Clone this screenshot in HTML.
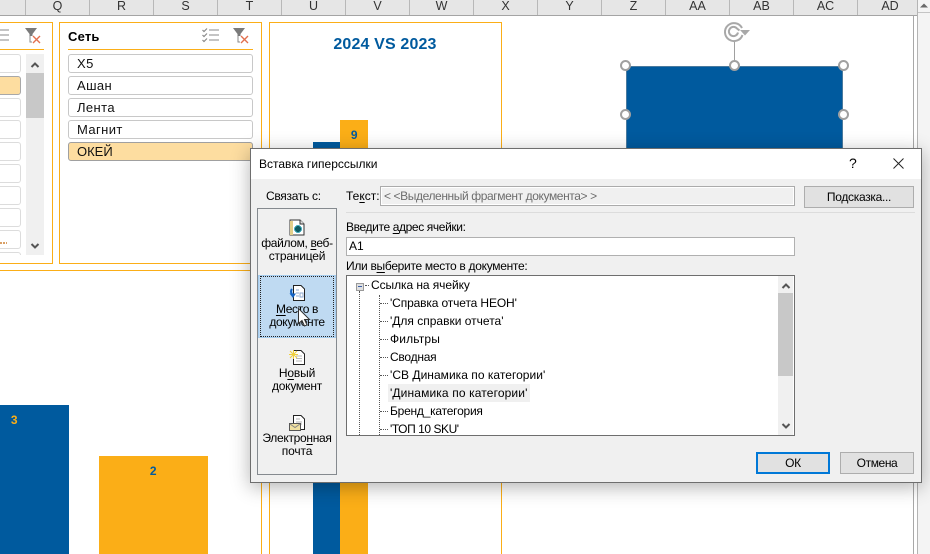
<!DOCTYPE html>
<html><head><meta charset="utf-8"><style>
html,body{margin:0;padding:0;background:#fff}
#p{position:relative;width:930px;height:554px;overflow:hidden;background:#fff;font-family:"Liberation Sans",sans-serif;font-size:12px;color:#000}
#p div{position:absolute;box-sizing:border-box}
.t{white-space:nowrap;line-height:14px;letter-spacing:-.3px}
.c{transform:translateX(-50%)}
.h{top:0;height:15px;line-height:13px;width:64px;text-align:center;font-size:12.5px;color:#333;border-right:1px solid #b8b8b8}
.i{left:68px;width:185px;height:19px;border:1px solid #c8c8c8;border-radius:3px;background:#fff;font-size:13px;line-height:18px;padding-left:8px;letter-spacing:.4px;color:#111}
.j{left:-40px;width:61px;height:19px;border:1px solid #dcdcdc;border-radius:3px;background:#fff}
.o{background:#fbae17}.b{background:#005a9e}
.hd{width:11px;height:11px;border-radius:50%;background:#fff;border:2px solid #a0a0a0}
u{text-decoration-thickness:1px;text-underline-offset:2px}
svg{position:absolute;overflow:visible}
.tr{left:390px}
</style></head><body><div id="p">

<!-- column headers -->
<div style="left:0;top:0;width:918px;height:16px;background:#e6e6e6;border-bottom:1px solid #a4a4a4"></div>
<div class="h" style="left:-38px"></div>
<div class="h" style="left:26px">Q</div><div class="h" style="left:90px">R</div><div class="h" style="left:154px">S</div><div class="h" style="left:218px">T</div><div class="h" style="left:282px">U</div><div class="h" style="left:346px">V</div><div class="h" style="left:410px">W</div><div class="h" style="left:474px">X</div><div class="h" style="left:538px">Y</div><div class="h" style="left:602px">Z</div><div class="h" style="left:666px">AA</div><div class="h" style="left:730px">AB</div><div class="h" style="left:794px">AC</div><div class="h" style="left:858px;border-right:0">AD</div>
<div style="left:913px;top:16px;width:1px;height:538px;background:#a8a8a8"></div>
<div style="left:917px;top:0;width:13px;height:554px;background:#f4f4f4;border-left:1px solid #b4b4b4"></div>
<div style="left:918px;top:12px;width:12px;height:1px;background:#c4c4c4"></div>
<svg style="left:920px;top:3px" width="8" height="5"><path d="M0 4.5L4 0.5L8 4.5Z" fill="#6a6a6a"/></svg>

<!-- outer slicer frame -->
<div style="left:-10px;top:22px;width:272px;height:249px;border:1px solid #fbae17;border-top:0"></div>
<div style="left:261px;top:270px;width:1px;height:284px;background:#fbae17"></div>

<!-- left slicer -->
<div style="left:-10px;top:22px;width:63px;height:242px;border:1px solid #fbae17"></div>
<div style="left:0;top:49px;width:44px;height:1px;background:#fbae17"></div>
<div class="j" style="top:54px"></div>
<div class="j" style="top:76px;background:#fddda0;border-color:#a8a8a8"></div>
<div class="j" style="top:98px"></div><div class="j" style="top:120px"></div><div class="j" style="top:142px"></div><div class="j" style="top:164px"></div><div class="j" style="top:186px"></div><div class="j" style="top:208px"></div><div class="j" style="top:230px"></div>
<div class="j" style="top:252px;height:3px;border-bottom:0;border-radius:3px 3px 0 0"></div>
<div style="left:0;top:242px;width:7px;height:2px;background:repeating-linear-gradient(90deg,#d9a066 0 2px,transparent 2px 3px)"></div>
<div style="left:26px;top:54px;width:18px;height:201px;background:#f0f0f0"></div>
<div style="left:26px;top:73px;width:18px;height:45px;background:#c8c8c8"></div>
<svg style="left:31px;top:62px" width="8" height="6"><path d="M0.5 5L4 1.5L7.5 5" fill="none" stroke="#555" stroke-width="2"/></svg>
<svg style="left:31px;top:243px" width="8" height="6"><path d="M0.5 1L4 4.5L7.5 1" fill="none" stroke="#555" stroke-width="2"/></svg>
<svg style="left:0;top:29px" width="10" height="12"><path d="M0 1H9M0 6H9M0 11H9" stroke="#8a8a8a" stroke-width="1" fill="none"/></svg>
<svg style="left:25px;top:28px" width="16" height="16"><path d="M0 0H12L7.5 6V8H4.5V6Z" fill="#7a7a7a"/><path d="M5 8V14H7" stroke="#8a8a8a" fill="none"/><path d="M8 8L15 15M15 8L8 15" stroke="#e2704f" stroke-width="1.4"/></svg>

<!-- second slicer -->
<div style="left:59px;top:22px;width:203px;height:242px;border:1px solid #fbae17"></div>
<div class="t" style="left:68px;top:30px;font-size:13px;font-weight:bold;letter-spacing:.2px">Сеть</div>
<div style="left:68px;top:49px;width:185px;height:1px;background:#fbae17"></div>
<svg style="left:202px;top:28px" width="17" height="14"><path d="M0.5 2L2 3.5L5 0.5M0.5 7L2 8.5L5 5.5M0.5 12L2 13.5L5 10.5" fill="none" stroke="#8a8a8a" stroke-width="1.2"/><path d="M7 2H17M7 7H17M7 12H17" stroke="#8a8a8a" stroke-width="1"/></svg>
<svg style="left:233px;top:28px" width="17" height="16"><path d="M0 0H12L7.5 6V8H4.5V6Z" fill="#7a7a7a"/><path d="M5 8V14H7" stroke="#8a8a8a" fill="none"/><path d="M8 8L15 15M15 8L8 15" stroke="#e2704f" stroke-width="1.4"/></svg>
<div class="i" style="top:54px">X5</div>
<div class="i" style="top:76px">Ашан</div>
<div class="i" style="top:98px">Лента</div>
<div class="i" style="top:120px">Магнит</div>
<div class="i" style="top:142px;background:#fddda0;border-color:#a0a0a0;letter-spacing:0">ОКЕЙ</div>

<!-- third panel chart -->
<div style="left:269px;top:22px;width:233px;height:532px;border:1px solid #fbae17;border-bottom:0"></div>
<div class="t c" style="left:385px;top:36px;font-size:16px;line-height:18px;font-weight:bold;color:#005a9e;letter-spacing:.15px">2024 VS 2023</div>
<div class="b" style="left:313px;top:142px;width:27px;height:412px"></div>
<div class="o" style="left:340px;top:120px;width:28px;height:434px"></div>
<div class="t c" style="left:354px;top:128px;font-weight:bold;color:#005a9e;font-size:12px">9</div>

<!-- bottom chart -->
<div class="b" style="left:0;top:405px;width:69px;height:149px"></div>
<div class="t c" style="left:14px;top:413px;font-weight:bold;color:#fbae17">3</div>
<div class="o" style="left:99px;top:456px;width:109px;height:98px"></div>
<div class="t c" style="left:153px;top:464px;font-weight:bold;color:#005a9e">2</div>

<!-- selected shape -->
<div class="b" style="left:626px;top:66px;width:217px;height:120px;border:1px solid #4a7a9e;border-bottom:0"></div>
<div style="left:734px;top:41px;width:1px;height:20px;background:#a0a0a0"></div>
<div class="hd" style="left:620px;top:60px"></div><div class="hd" style="left:729px;top:60px"></div><div class="hd" style="left:838px;top:60px"></div>
<div class="hd" style="left:620px;top:109px"></div><div class="hd" style="left:838px;top:109px"></div>
<svg style="left:724px;top:21px" width="27" height="22"><path d="M18 7A9 9 0 1 0 18.5 14" fill="none" stroke="#a8a8a8" stroke-width="2"/><path d="M14 11.5A4.6 4.6 0 1 1 13 7.5L15.5 9.5" fill="none" stroke="#a8a8a8" stroke-width="2"/><path d="M16 9H26L21 14.5Z" fill="#a8a8a8"/></svg>

<!-- dialog -->
<div style="left:250px;top:148px;width:672px;height:335px;background:#f0f0f0;border:1px solid #6e6e6e;box-shadow:0 4px 18px rgba(0,0,0,.3)"></div>
<div style="left:251px;top:149px;width:670px;height:30px;background:#fff"></div>
<div class="t" style="left:259px;top:157px;letter-spacing:0">Вставка гиперссылки</div>
<div class="t" style="left:849px;top:156px;font-size:14px">?</div>
<svg style="left:893px;top:158px" width="11" height="11"><path d="M0.5 0.5L10.5 10.5M10.5 0.5L0.5 10.5" stroke="#222" stroke-width="1" fill="none"/></svg>

<div class="t" style="left:266px;top:189px">Связать с:</div>
<div class="t" style="left:346px;top:189px;letter-spacing:0">Те<u>к</u>ст:</div>
<div style="left:380px;top:186px;width:415px;height:20px;background:#f0f0f0;border:1px solid #ababab;box-shadow:inset 0 0 0 1px #fff"></div>
<div class="t" style="left:384px;top:189px;color:#6d6d6d;letter-spacing:-.4px">&lt; &lt;Выделенный фрагмент документа&gt; &gt;</div>
<div style="left:804px;top:186px;width:110px;height:22px;background:#e1e1e1;border:1px solid #adadad"></div>
<div class="t c" style="left:859px;top:190px">Подсказка...</div>
<div style="left:346px;top:212px;width:569px;height:1px;background:#dcdcdc"></div>

<div class="t" style="left:346px;top:220px;letter-spacing:-.38px">Введите <u>а</u>дрес ячейки:</div>
<div style="left:346px;top:237px;width:449px;height:19px;background:#fff;border:1px solid #b0b0b0"></div>
<div class="t" style="left:349px;top:239px;letter-spacing:0">А1</div>
<div class="t" style="left:346px;top:259px">Или в<u>ы</u>берите место в документе:</div>

<!-- nav bar -->
<div style="left:257px;top:208px;width:80px;height:267px;background:#f0f0f0;border:1px solid #858a8f"></div>
<div style="left:258px;top:275px;width:78px;height:63px;background:#bfdaf2;border:1px solid #a6cdef"></div>
<div style="left:260px;top:276px;width:74px;height:61px;border:1px dotted #222"></div>

<svg style="left:289px;top:220px" width="17" height="16" shape-rendering="crispEdges"><path d="M1 0H11L15 4V15H1Z" fill="#fff" stroke="#333"/><path d="M1 1H4V15H1Z" fill="#e3cf8a"/><path d="M11 0V4H15" fill="#ddd" stroke="#333"/><circle cx="9" cy="9" r="3.5" fill="#0f5a62" stroke="#4ab0c0"/></svg>
<svg style="left:289px;top:285px" width="17" height="17"><path d="M4.5 0.5H12L15.5 4V15.5H4.5Z" fill="#fff" stroke="#222"/><path d="M7 5H10M7 8H10M11 8H14V12H11ZM7 11H10" stroke="#8eaad0" fill="none"/><path d="M3 4A4 4 0 0 0 4 10" stroke="#1363c4" stroke-width="2" fill="none"/><path d="M0.5 8.5H7L4 13Z" fill="#1363c4"/></svg>
<svg style="left:289px;top:349px" width="17" height="16"><path d="M4.5 1.5H12L15.5 5V15.5H4.5Z" fill="#fff" stroke="#222"/><path d="M7 7H13M7 9.5H13M7 12H13" stroke="#b8b8b8"/><path d="M0 5.5H9M4.5 1V10M1 2L8 9M8 2L1 9" stroke="#f0cf3c" stroke-width="1"/></svg>
<svg style="left:289px;top:415px" width="17" height="16"><path d="M4.5 0.5H12L15.5 4V14.5H4.5Z" fill="#fff" stroke="#222"/><path d="M7 4H11M7 7H13M7 9H13" stroke="#b0b0b0"/><rect x="0.5" y="8.5" width="11" height="7" fill="#f0e0a0" stroke="#555"/><path d="M1 9L6 12.5L11 9" stroke="#888" fill="none"/></svg>

<div class="t c" style="left:297px;top:236px;letter-spacing:-.35px">файлом, <u>в</u>еб-</div>
<div class="t c" style="left:297px;top:249px;letter-spacing:-.2px">страницей</div>
<div class="t c" style="left:297px;top:302px;letter-spacing:-.35px"><u>М</u>есто в</div>
<div class="t c" style="left:297px;top:315px;letter-spacing:-.35px">документе</div>
<div class="t c" style="left:297px;top:366px;letter-spacing:-.15px">Н<u>о</u>вый</div>
<div class="t c" style="left:297px;top:379px;letter-spacing:-.25px">документ</div>
<div class="t c" style="left:297px;top:431px">Электро<u>н</u>ная</div>
<div class="t c" style="left:297px;top:444px;letter-spacing:-.15px">почта</div>
<svg style="left:298px;top:308px" width="14" height="20"><path d="M0.5 0.5V15.5L4 12.5L6.5 18L9 17L6.5 11.5H11.5Z" fill="#fff" stroke="#333" stroke-width="1"/></svg>

<!-- tree -->
<div style="left:346px;top:275px;width:449px;height:161px;background:#fff;border:1px solid #6e6e6e"></div>
<div style="left:778px;top:276px;width:15px;height:159px;background:#f0f0f0"></div>
<div style="left:778px;top:293px;width:15px;height:83px;background:#c8c8c8"></div>
<svg style="left:782px;top:283px" width="8" height="6"><path d="M0.5 5L4 1.5L7.5 5" fill="none" stroke="#555" stroke-width="2"/></svg>
<svg style="left:782px;top:423px" width="8" height="6"><path d="M0.5 1L4 4.5L7.5 1" fill="none" stroke="#555" stroke-width="2"/></svg>
<div style="left:359px;top:291px;width:0;height:144px;border-left:1px dotted #555"></div>
<div style="left:379px;top:295px;width:0;height:140px;border-left:1px dotted #555"></div>
<div style="left:365px;top:285px;width:4px;height:0;border-top:1px dotted #555"></div>
<div style="left:380px;top:303px;width:8px;height:0;border-top:1px dotted #555"></div>
<div style="left:380px;top:321px;width:8px;height:0;border-top:1px dotted #555"></div>
<div style="left:380px;top:339px;width:8px;height:0;border-top:1px dotted #555"></div>
<div style="left:380px;top:357px;width:8px;height:0;border-top:1px dotted #555"></div>
<div style="left:380px;top:375px;width:8px;height:0;border-top:1px dotted #555"></div>
<div style="left:380px;top:411px;width:8px;height:0;border-top:1px dotted #555"></div>
<div style="left:380px;top:429px;width:8px;height:0;border-top:1px dotted #555"></div>
<div style="left:356px;top:283px;width:8px;height:8px;background:#e0e0e0;border:1px solid #999"></div>
<div style="left:358px;top:286px;width:4px;height:1px;background:#3a5ea8"></div>
<div style="left:388px;top:384px;width:142px;height:18px;background:#f0f0f0"></div>
<div class="t" style="left:371px;top:278px;letter-spacing:-.07px">Ссылка на ячейку</div>
<div class="t tr" style="top:296px;letter-spacing:-.13px">'Справка отчета НЕОН'</div>
<div class="t tr" style="top:314px;letter-spacing:0">'Для справки отчета'</div>
<div class="t tr" style="top:332px;letter-spacing:.15px">Фильтры</div>
<div class="t tr" style="top:350px;letter-spacing:-.25px">Сводная</div>
<div class="t tr" style="top:368px;letter-spacing:.03px">'СВ Динамика по категории'</div>
<div class="t tr" style="top:386px;letter-spacing:.13px">'Динамика по категории'</div>
<div class="t tr" style="top:404px;letter-spacing:-.23px">Бренд_категория</div>
<div class="t tr" style="top:422px;letter-spacing:-.45px">'ТОП 10 SKU'</div>

<!-- buttons -->
<div style="left:756px;top:452px;width:74px;height:22px;background:#e1e1e1;border:2px solid #0078d7"></div>
<div class="t c" style="left:793px;top:456px">ОК</div>
<div style="left:840px;top:452px;width:74px;height:22px;background:#e1e1e1;border:1px solid #adadad"></div>
<div class="t c" style="left:877px;top:456px;letter-spacing:-.4px">Отмена</div>

</div></body></html>
